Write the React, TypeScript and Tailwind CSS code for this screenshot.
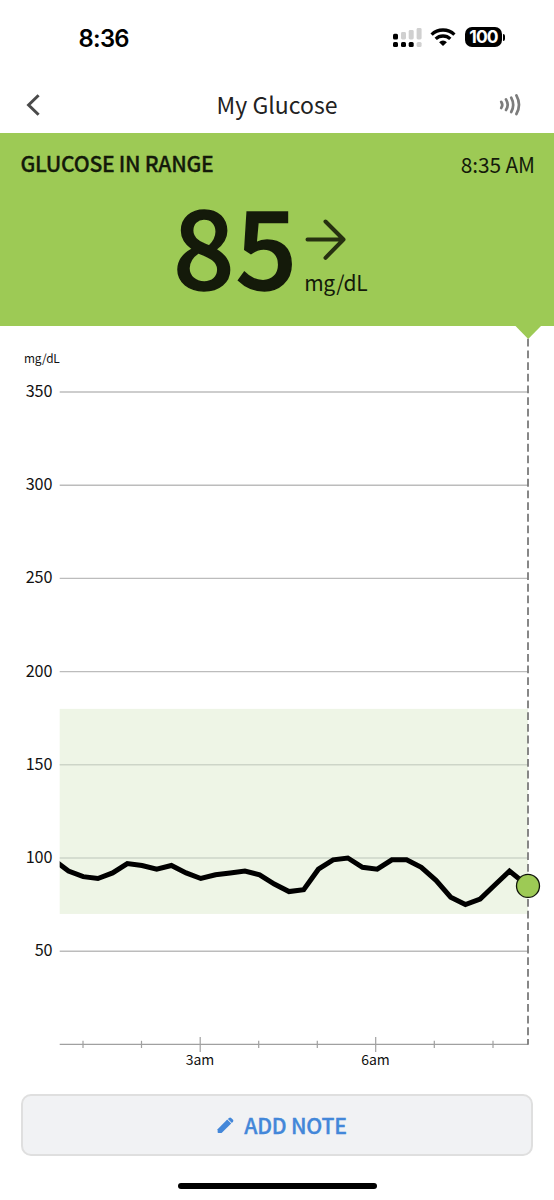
import React from 'react';

const START_X = 68.5;
const STEP_X = 14.7;
const readings = [
  93, 90, 89, 92, 97, 96, 94, 96, 92, 89, 91, 92, 93, 91, 86, 82, 83, 94, 99, 100, 95, 94, 99, 99, 95, 88, 79, 75, 78,
  85.5, 93,
];

const yOf = (value: number) => 718.4 - value * 1.864;

const points = [
  `56,${yOf(98)}`,
  ...readings.map((v, i) => `${START_X + i * STEP_X},${yOf(v)}`),
  `528,${yOf(85)}`,
].join(' ');

const levels = [350, 300, 250, 200, 150, 100, 50];
const hours = [
  { x: 83 },
  { x: 141.5 },
  { x: 200.2, label: '3am' },
  { x: 258.7 },
  { x: 317.3 },
  { x: 375.7, label: '6am' },
  { x: 434.3 },
  { x: 493 },
];

function StatusBar() {
  return (
    <div className="flex h-[76px] items-center justify-between pr-[49px] pl-[78.5px] font-['Inter',sans-serif]">
      <span className="text-[23.8px] leading-[75px] font-semibold tracking-[-0.7px] text-black">8:36</span>
      <div className="flex items-center">
        <svg width="30" height="22" viewBox="0 0 30 22" className="mt-[-1px] mr-[8px]">
          <g fill="#000">
            <rect x="1" y="6.7" width="5" height="5.8" rx="1.5" />
            <rect x="1" y="15" width="5" height="5" rx="1.5" />
            <rect x="9" y="15" width="5" height="5" rx="1.5" />
            <rect x="16.7" y="15" width="5" height="5" rx="1.5" />
          </g>
          <g fill="#d0d0d0">
            <rect x="9" y="5" width="5" height="7.5" rx="1.4" />
            <rect x="16.7" y="3" width="5" height="9.5" rx="1.4" />
            <rect x="24.6" y="1" width="5" height="11.5" rx="1.4" />
            <rect x="24.6" y="15" width="5" height="5" rx="1.5" />
          </g>
        </svg>
        <svg
          width="26"
          height="20"
          viewBox="0 0 26 20"
          fill="none"
          stroke="#000"
          strokeWidth="3.3"
          className="mt-[-2px] mr-[9px]"
        >
          <path d="M1.6 7.6 A16.4 16.4 0 0 1 24.4 7.6" />
          <path d="M5.7 11.9 A10.6 10.6 0 0 1 20.3 11.9" />
          <path d="M9.1 15.2 A5.6 5.6 0 0 1 16.9 15.2 L13 19 Z" fill="#000" stroke="none" />
        </svg>
        <div className="mt-[-2px] flex h-[20px] w-[37px] items-center justify-center rounded-[7px] bg-black text-[17.5px] leading-[20px] font-bold tracking-[-0.9px] text-white">
          100
        </div>
        <div className="mt-[-1px] ml-[1px] h-[7px] w-[2px] rounded-r-full bg-black" />
      </div>
    </div>
  );
}

function NavBar() {
  return (
    <div className="flex h-[57px] items-center justify-between pr-[32px] pl-[26px]">
      <svg width="16" height="24" viewBox="0 0 16 24" fill="none" stroke="#4a4a4a" strokeWidth="3">
        <path d="M12.6 2.2 L2.6 12 L12.6 21.8" />
      </svg>
      <h1 className="ml-[14px] text-[23px] leading-[57px] font-normal text-[#222]">My Glucose</h1>
      <svg
        width="24"
        height="24"
        viewBox="0 0 24 24"
        fill="none"
        stroke="#7c7c7c"
        strokeWidth="2.7"
        strokeLinecap="round"
      >
        <path d="M3.2 8.8 Q5.4 12 3.2 15" />
        <path d="M8 6.4 Q11.4 12 8 17" />
        <path d="M13.2 4.6 Q17.2 12 13.2 19" />
        <path d="M18.4 2.4 Q23.6 12 18.4 21" />
      </svg>
    </div>
  );
}

function CurrentReading() {
  return (
    <section className="h-[193px] bg-[#9dca55] text-[#141a0a]">
      <div className="flex h-[60px] items-center justify-between pr-[19px] pl-[20.5px]">
        <span className="text-[21.2px] leading-[60px] font-medium tracking-[-0.3px] [-webkit-text-stroke:0.3px_#141a0a]">
          GLUCOSE IN RANGE
        </span>
        <span className="pt-[2px] text-[20.9px] leading-[60px] font-normal tracking-[-0.1px]">8:35 AM</span>
      </div>
      <div className="flex pl-[173px]">
        <span className="h-[120px] text-[108px] leading-[99px] font-medium tracking-[1px] [-webkit-text-stroke:1.5px_#141a0a]">
          85
        </span>
        <div className="flex flex-col pt-[24px] pl-[6px]">
          <svg
            width="42"
            height="44"
            viewBox="0 0 42 44"
            fill="none"
            stroke="#263010"
            strokeWidth="4"
            strokeLinecap="round"
            strokeLinejoin="round"
            className="ml-[1px]"
          >
            <path d="M2.5 22.5 H38.5 M20.5 4.5 L38.5 22.5 L20.5 40.8" />
          </svg>
          <span className="pt-[2px] text-[21px] leading-[38px] tracking-[-0.2px]">mg/dL</span>
        </div>
      </div>
    </section>
  );
}

function GlucoseChart() {
  return (
    <svg width="554" height="768" viewBox="0 0 554 768" className="block shrink-0">
      <defs>
        <clipPath id="plot">
          <rect x="59.7" y="0" width="494.3" height="768" />
        </clipPath>
      </defs>
      <rect x="59.7" y={yOf(180)} width="468.3" height={yOf(70) - yOf(180)} fill="#eef5e6" />
      <text x="24" y="37" fontSize="11.9" letterSpacing="-0.15" fill="#111">
        mg/dL
      </text>
      {levels.map((level) => (
        <g key={level}>
          <line
            x1="59.7"
            x2="528"
            y1={yOf(level)}
            y2={yOf(level)}
            stroke={level > 70 && level < 180 ? '#cdd5c8' : '#bcbcbc'}
            strokeWidth="1.4"
          />
          <text x="52.6" y={yOf(level) + 5} fontSize="16.2" textAnchor="end" fill="#111">
            {level}
          </text>
        </g>
      ))}
      <line x1="59.7" x2="528" y1="718.4" y2="718.4" stroke="#a0a0a0" strokeWidth="1.2" />
      {hours.map((hour) => (
        <g key={hour.x}>
          <line
            x1={hour.x}
            x2={hour.x}
            y1={hour.label ? 711 : 714.8}
            y2={hour.label ? 726 : 722}
            stroke="#a0a0a0"
            strokeWidth="1.2"
          />
          {hour.label && (
            <text x={hour.x - 0.2} y="739.4" fontSize="14" textAnchor="middle" fill="#111">
              {hour.label}
            </text>
          )}
        </g>
      ))}
      <path d="M515.5 0 H541 L528.2 13 Z" fill="#9dca55" />
      <line x1="528" x2="528" y1="12.8" y2="718.8" stroke="#7b7b7b" strokeWidth="1.8" strokeDasharray="7.8 3.87" />
      <polyline points={points} fill="none" stroke="#000" strokeWidth="5" clipPath="url(#plot)" />
      <circle cx="528" cy={yOf(85)} r="11.5" fill="#9dca55" stroke="#10140a" strokeWidth="1.3" />
    </svg>
  );
}

export default function App() {
  return (
    <main className="flex h-[1200px] w-[554px] flex-col overflow-hidden bg-white font-['Noto_Sans_CJK_SC',sans-serif]">
      <StatusBar />
      <NavBar />
      <CurrentReading />
      <GlucoseChart />
      <button className="mx-[21px] flex h-[62px] shrink-0 items-center justify-center rounded-[10px] border-2 border-[#dfdfdf] bg-[#f1f2f4] pl-[10px] text-[#4387d9]">
        <svg width="17" height="17" viewBox="0 0 17 17" fill="#4387d9" className="mr-[10px]">
          <path d="M0.6 12.2 L10.2 2.6 L14.2 6.6 L4.6 16 H1.4 Q0.6 16 0.6 15.2 Z" />
          <path d="M10.9 2 L12 0.9 Q13.2 0.1 14.2 0.9 L16 2.7 Q16.8 3.8 16 4.8 L14.9 5.9 Z" />
        </svg>
        <span className="text-[21.2px] leading-[58px] font-medium tracking-[-0.2px] [-webkit-text-stroke:0.35px_#4387d9]">
          ADD NOTE
        </span>
      </button>
      <div className="mx-auto mt-[27px] h-[6px] w-[199px] shrink-0 rounded-full bg-black" />
    </main>
  );
}
